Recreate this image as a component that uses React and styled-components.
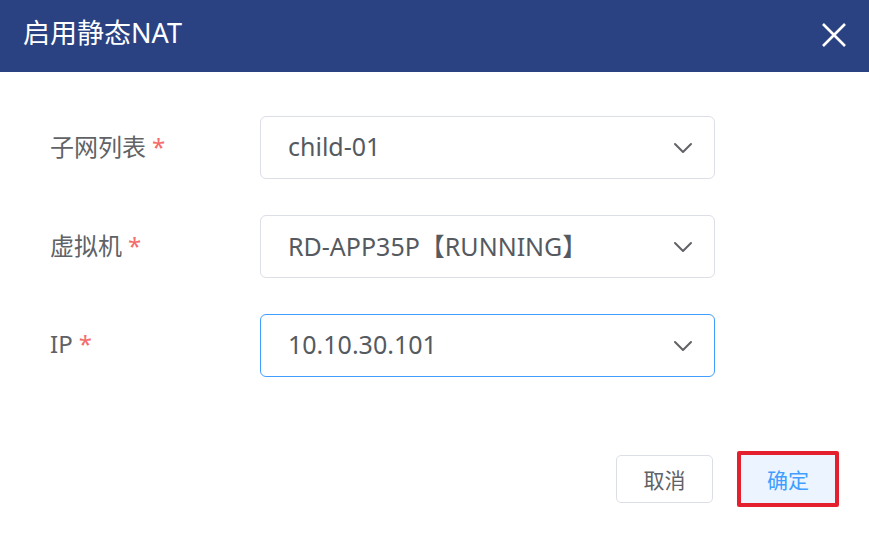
import styled, { createGlobalStyle } from "styled-components";

const Global = createGlobalStyle`
  body {
    margin: 0;
    background: #fff;
    font-family: "Noto Sans", "Noto Sans CJK SC", sans-serif;
  }
`;

const Dialog = styled.div`
  width: 869px;
  height: 538px;
  background: #fff;
  display: flex;
  flex-direction: column;
`;

const Header = styled.div`
  height: 72px;
  background: #2b4282;
  display: flex;
  align-items: center;
  justify-content: space-between;
  padding: 0 20px 0 23px;
  box-sizing: border-box;
`;

const Title = styled.div`
  color: #fff;
  font-size: 27px;
  margin-top: -9px;
`;

const Close = styled.button`
  background: none;
  border: none;
  padding: 0;
  width: 30px;
  height: 30px;
  margin-top: -3px;
  cursor: pointer;
`;

const Form = styled.div`
  padding: 44px 0 0 50px;
  display: flex;
  flex-direction: column;
  gap: 36px;
`;

const Row = styled.div`
  display: flex;
  align-items: center;
`;

const Label = styled.div`
  width: 210px;
  font-size: 24px;
  color: #606266;
  margin-top: -4px;
`;

const Star = styled.span`
  color: #f56c6c;
  margin-left: 6px;
`;

const Select = styled.div`
  width: 455px;
  height: 63px;
  box-sizing: border-box;
  border: 1px solid ${({ focused }) => (focused ? "#409eff" : "#dcdfe6")};
  border-radius: 6px;
  display: flex;
  align-items: center;
  justify-content: space-between;
  padding: 0 20px 0 27px;
  font-size: 25px;
  color: #555a61;

  span {
    margin-top: -4px;
  }
`;

const Footer = styled.div`
  display: flex;
  justify-content: flex-end;
  align-items: center;
  gap: 24px;
  padding: 0 30px 0 0;
  margin-top: 74px;
`;

const Button = styled.button`
  font-family: inherit;
  width: 97px;
  height: 48px;
  border-radius: 5px;
  font-size: 21px;
  border: 1px solid #dcdfe6;
  background: #fff;
  color: #606266;
  cursor: pointer;
`;

const Highlight = styled.div`
  border: 4px solid #e5202e;
  border-radius: 2px;
  display: flex;
`;

const PrimaryButton = styled(Button)`
  width: 94px;
  height: 48px;
  border: none;
  border-radius: 0;
  background: #ecf5ff;
  color: #409eff;
`;

const Chevron = () => (
  <svg width="22" height="22" viewBox="0 0 22 22" fill="none">
    <path d="M3 7l8 8 8-8" stroke="#606266" strokeWidth="2" strokeLinecap="round" strokeLinejoin="round" />
  </svg>
);

const fields = [
  { label: "子网列表", value: "child-01" },
  { label: "虚拟机", value: "RD-APP35P【RUNNING】" },
  { label: "IP", value: "10.10.30.101", focused: true },
];

export default function App() {
  return (
    <Dialog>
      <Global />
      <Header>
        <Title>启用静态NAT</Title>
        <Close>
          <svg width="30" height="30" viewBox="0 0 30 30">
            <path d="M4 4l22 22M26 4L4 26" stroke="#fff" strokeWidth="2.6" />
          </svg>
        </Close>
      </Header>
      <Form>
        {fields.map((f) => (
          <Row key={f.label}>
            <Label>
              {f.label}
              <Star>*</Star>
            </Label>
            <Select focused={f.focused}>
              <span>{f.value}</span>
              <Chevron />
            </Select>
          </Row>
        ))}
      </Form>
      <Footer>
        <Button>取消</Button>
        <Highlight>
          <PrimaryButton>确定</PrimaryButton>
        </Highlight>
      </Footer>
    </Dialog>
  );
}
